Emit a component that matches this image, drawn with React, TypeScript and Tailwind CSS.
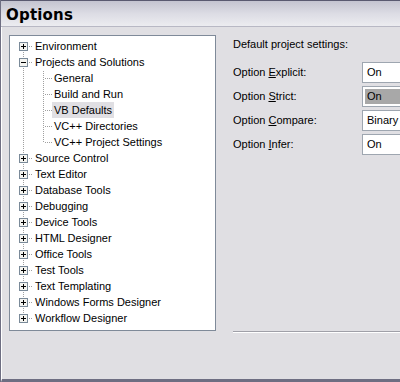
const font = { fontFamily: '"Liberation Sans", Arial, sans-serif' }

type Kind = 'plus' | 'minus' | 'child'

interface TreeItem {
  label: string
  kind: Kind
  selected?: boolean
}

const items: TreeItem[] = [
  { label: 'Environment', kind: 'plus' },
  { label: 'Projects and Solutions', kind: 'minus' },
  { label: 'General', kind: 'child' },
  { label: 'Build and Run', kind: 'child' },
  { label: 'VB Defaults', kind: 'child', selected: true },
  { label: 'VC++ Directories', kind: 'child' },
  { label: 'VC++ Project Settings', kind: 'child' },
  { label: 'Source Control', kind: 'plus' },
  { label: 'Text Editor', kind: 'plus' },
  { label: 'Database Tools', kind: 'plus' },
  { label: 'Debugging', kind: 'plus' },
  { label: 'Device Tools', kind: 'plus' },
  { label: 'HTML Designer', kind: 'plus' },
  { label: 'Office Tools', kind: 'plus' },
  { label: 'Test Tools', kind: 'plus' },
  { label: 'Text Templating', kind: 'plus' },
  { label: 'Windows Forms Designer', kind: 'plus' },
  { label: 'Workflow Designer', kind: 'plus' },
]

const dot = '#a0a0a0'

function Lines({ kind, first, last, childLast }: { kind: Kind; first: boolean; last: boolean; childLast: boolean }) {
  const w = kind === 'child' ? 42 : 23
  return (
    <svg width={w} height={16} className="shrink-0" shapeRendering="crispEdges">
      {/* top-level vertical */}
      <line x1={13.5} x2={13.5} y1={first ? 8 : 0} y2={last ? 8 : 16} stroke={dot} strokeDasharray="1 1" />
      {kind === 'child' ? (
        <>
          <line x1={33.5} x2={33.5} y1={1} y2={childLast ? 8 : 16} stroke={dot} strokeDasharray="1 1" />
          <line x1={35} x2={42} y1={8.5} y2={8.5} stroke={dot} strokeDasharray="1 1" />
        </>
      ) : (
        <>
          <line x1={19} x2={23} y1={8.5} y2={8.5} stroke={dot} strokeDasharray="1 1" />
          <rect x={9.5} y={4.5} width={8} height={8} fill="#f4f4f0" stroke="#7a8a99" />
          <line x1={11} x2={16} y1={8.5} y2={8.5} stroke="#000" />
          {kind === 'plus' && <line x1={13.5} x2={13.5} y1={6} y2={11} stroke="#000" />}
        </>
      )}
    </svg>
  )
}

function Combo({ value, active }: { value: string; active?: boolean }) {
  return (
    <div className="h-[21px] w-[60px] border border-[#9ea6b0] bg-white p-[2px]">
      <div className={`h-full pl-[2px] flex items-center text-[11px] text-black ${active ? 'bg-[#a8a8a8]' : ''}`}>
        {value}
      </div>
    </div>
  )
}

function OptionRow({ pre, key1, post, value, active }: { pre: string; key1: string; post: string; value: string; active?: boolean }) {
  return (
    <div className="flex items-center h-[21px]">
      <span className="w-[129px] text-[11px] text-black">
        {pre}
        <span className="underline underline-offset-1">{key1}</span>
        {post}
      </span>
      <Combo value={value} active={active} />
    </div>
  )
}

export default function App() {
  const lastTop = items.length - 1
  return (
    <div className="w-[400px] h-[382px] overflow-hidden flex flex-col bg-[#e0dfe3] border-l border-l-[#6e6e82]" style={font}>
      {/* Title bar */}
      <div className="h-[27px] shrink-0 flex items-center pl-[5px] pt-[3px] border-t border-t-[#5a5a70] border-b border-b-[#b8b8c4] bg-gradient-to-b from-[#c4c4d0] via-[#dcdce4] to-[#ececf0]">
        <span className="text-[15px] font-bold text-black tracking-[0.2px]" style={{ fontFamily: '"DejaVu Sans", sans-serif' }}>
          Options
        </span>
      </div>

      {/* Body */}
      <div className="flex-1 flex border-l border-l-white border-b-[3px] border-b-[#6e6e82]">
        {/* Tree */}
        <div className="ml-[7px] mt-[8px] w-[207px] h-[296px] bg-white border border-[#7f8a99] pt-[2px] shrink-0">
          {items.map((it, i) => (
            <div key={it.label} className="flex items-center h-4">
              <Lines
                kind={it.kind}
                first={i === 0}
                last={i === lastTop}
                childLast={it.label === 'VC++ Project Settings'}
              />
              <span
                className={`text-[11px] text-black leading-4 px-[2px] ${it.selected ? 'bg-[#e0dfe3]' : ''}`}
              >
                {it.label}
              </span>
            </div>
          ))}
        </div>

        {/* Right panel */}
        <div className="flex-1 flex flex-col pl-[17px] pt-[9px]">
          <div className="text-[11px] text-black h-4 leading-4">Default project settings:</div>
          <div className="mt-[10px] flex flex-col gap-[3px]">
            <OptionRow pre="Option " key1="E" post="xplicit:" value="On" />
            <OptionRow pre="Option " key1="S" post="trict:" value="On" active />
            <OptionRow pre="Option " key1="C" post="ompare:" value="Binary" />
            <OptionRow pre="Option " key1="I" post="nfer:" value="On" />
          </div>
          <div className="mt-auto mb-[46px] h-[2px] border-t border-t-[#a0a0a8] border-b border-b-white" />
        </div>
      </div>
    </div>
  )
}
